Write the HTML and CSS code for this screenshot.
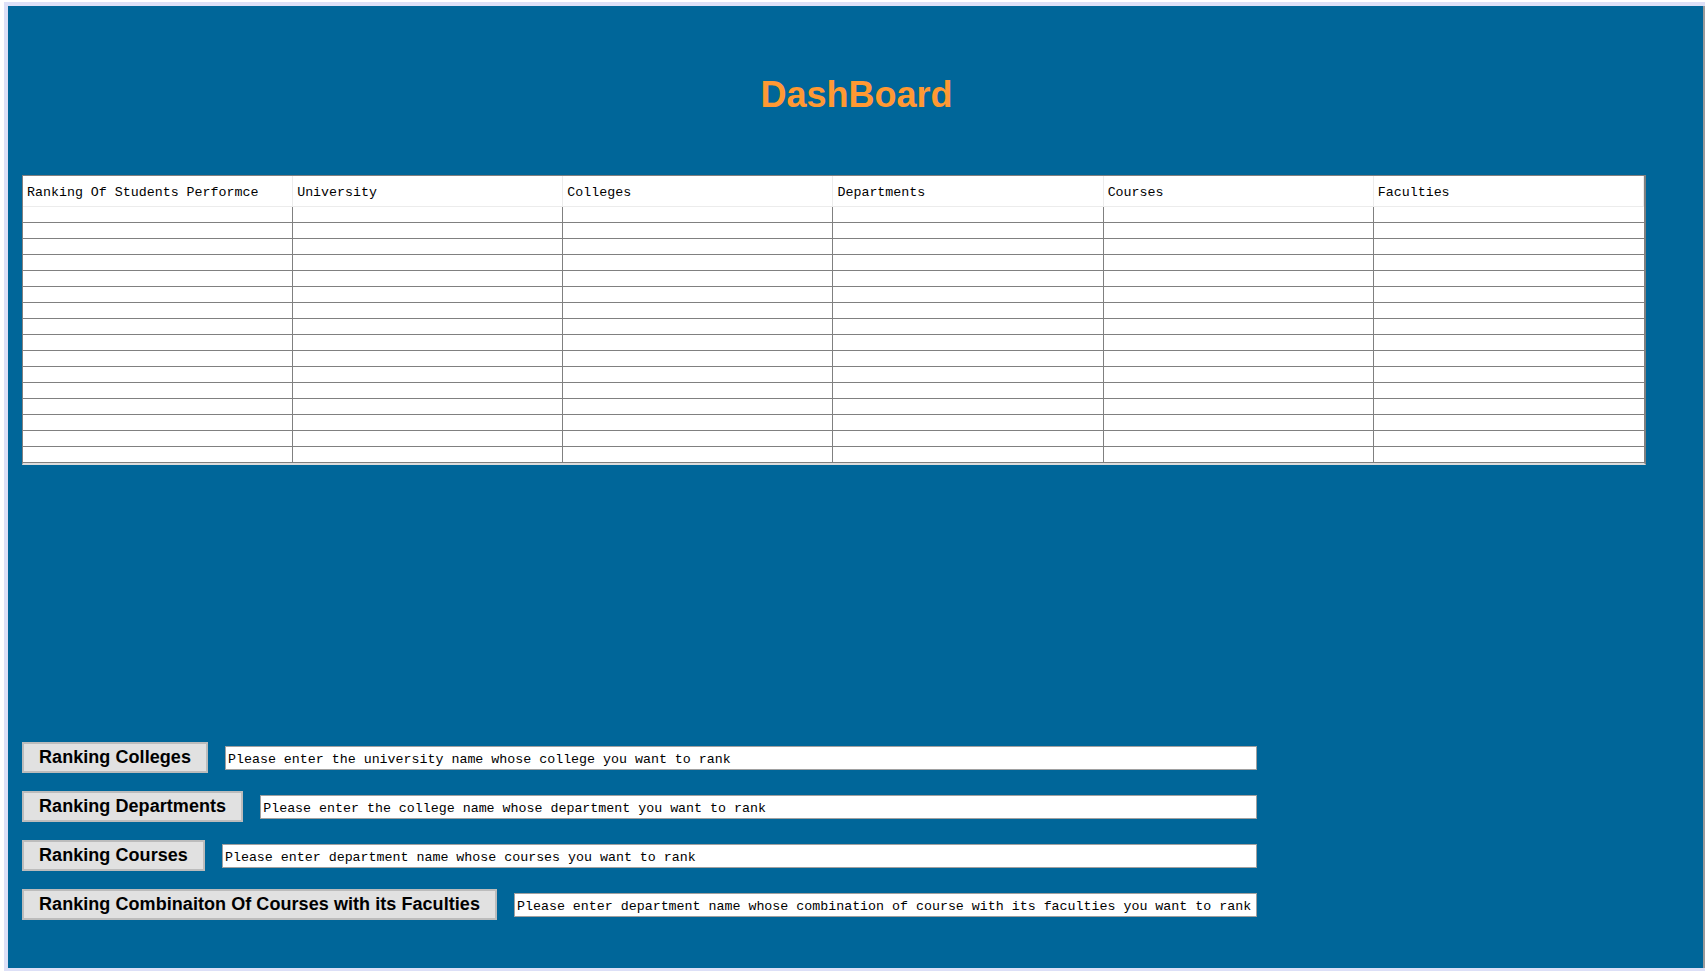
FILE: index.html
```html
<!DOCTYPE html>
<html>
<head>
<meta charset="utf-8">
<title>DashBoard</title>
<link rel="stylesheet" href="styles.css">
</head>
<body>
<div class="frame">
  <h1 class="title">DashBoard</h1>
  <table class="grid">
    <thead>
      <tr>
        <th>Ranking Of Students Performce</th>
        <th>University</th>
        <th>Colleges</th>
        <th>Departments</th>
        <th>Courses</th>
        <th>Faculties</th>
      </tr>
    </thead>
    <tbody>
      <tr><td></td><td></td><td></td><td></td><td></td><td></td></tr>
      <tr><td></td><td></td><td></td><td></td><td></td><td></td></tr>
      <tr><td></td><td></td><td></td><td></td><td></td><td></td></tr>
      <tr><td></td><td></td><td></td><td></td><td></td><td></td></tr>
      <tr><td></td><td></td><td></td><td></td><td></td><td></td></tr>
      <tr><td></td><td></td><td></td><td></td><td></td><td></td></tr>
      <tr><td></td><td></td><td></td><td></td><td></td><td></td></tr>
      <tr><td></td><td></td><td></td><td></td><td></td><td></td></tr>
      <tr><td></td><td></td><td></td><td></td><td></td><td></td></tr>
      <tr><td></td><td></td><td></td><td></td><td></td><td></td></tr>
      <tr><td></td><td></td><td></td><td></td><td></td><td></td></tr>
      <tr><td></td><td></td><td></td><td></td><td></td><td></td></tr>
      <tr><td></td><td></td><td></td><td></td><td></td><td></td></tr>
      <tr><td></td><td></td><td></td><td></td><td></td><td></td></tr>
      <tr><td></td><td></td><td></td><td></td><td></td><td></td></tr>
      <tr><td></td><td></td><td></td><td></td><td></td><td></td></tr>
    </tbody>
  </table>
  <div class="actions">
    <div class="action-row">
      <button class="btn" type="button">Ranking Colleges</button>
      <input class="field" type="text" value="Please enter the university name whose college you want to rank">
    </div>
    <div class="action-row">
      <button class="btn" type="button">Ranking Departments</button>
      <input class="field" type="text" value="Please enter the college name whose department you want to rank">
    </div>
    <div class="action-row">
      <button class="btn" type="button">Ranking Courses</button>
      <input class="field" type="text" value="Please enter department name whose courses you want to rank">
    </div>
    <div class="action-row">
      <button class="btn" type="button">Ranking Combinaiton Of Courses with its Faculties</button>
      <input class="field" type="text" value="Please enter department name whose combination of course with its faculties you want to rank">
    </div>
  </div>
</div>
</body>
</html>
```
FILE: styles.css
```css
html {
  background: #ffffff;
}
body {
  margin: 0;
  padding: 2px 0 2px 4px;
  font-family: "Liberation Sans", Arial, sans-serif;
}
.frame {
  box-sizing: border-box;
  height: 969px;
  background: #006699;
  border-style: solid;
  border-color: #dde0f7;
  border-width: 4px 0 3px 4px;
  box-shadow: inset -2px 0 0 #9a9a9a;
  padding: 0 0 0 14px;
}
.title {
  margin: 0;
  padding-top: 69px;
  padding-right: 14px;
  text-align: center;
  color: #ff9933;
  font-family: "Liberation Sans", Arial, sans-serif;
  font-weight: bold;
  font-size: 36px;
  line-height: 40px;
}
.grid {
  margin-top: 60px;
  width: 1624px;
  table-layout: fixed;
  border-collapse: separate;
  border-spacing: 0;
  background: #ffffff;
  border-top: 1px solid #808080;
  border-left: 1px solid #808080;
  border-right: 2px solid #808080;
  border-bottom: 2px solid #dcdcdc;
  font-family: "Liberation Mono", "Courier New", monospace;
  font-size: 13.3px;
  color: #000000;
}
.grid th {
  height: 31px;
  padding: 3px 0 0 4px;
  text-align: left;
  font-weight: normal;
  vertical-align: middle;
  border-right: 1px solid #ececec;
  border-bottom: 1px solid #ececec;
  box-sizing: border-box;
  white-space: nowrap;
  overflow: hidden;
}
.grid td {
  height: 16px;
  padding: 0;
  box-sizing: border-box;
  border-right: 1px solid #808080;
  border-bottom: 1px solid #808080;
}
.grid td:last-child {
  border-right: none;
}
.actions {
  margin-top: 277px;
  width: 1235px;
  display: flex;
  flex-direction: column;
  gap: 18px;
}
.action-row {
  display: flex;
  align-items: center;
  gap: 17px;
}
.btn {
  flex: none;
  margin: 0;
  padding: 3px 15px;
  font-family: "Liberation Sans", Arial, sans-serif;
  font-size: 18px;
  font-weight: bold;
  letter-spacing: 0.06px;
  line-height: 21px;
  color: #000000;
  background: #e1e1e1;
  border: 2px solid #bcbcbc;
  border-radius: 0;
}
.field {
  flex: 1;
  min-width: 0;
  box-sizing: border-box;
  height: 24px;
  margin: 0;
  padding: 3px 1px 0 2px;
  font-family: "Liberation Mono", "Courier New", monospace;
  font-size: 13.3px;
  color: #000000;
  background: #ffffff;
  border: 1px solid #a0a0a0;
  border-radius: 0;
  outline: none;
}
```
